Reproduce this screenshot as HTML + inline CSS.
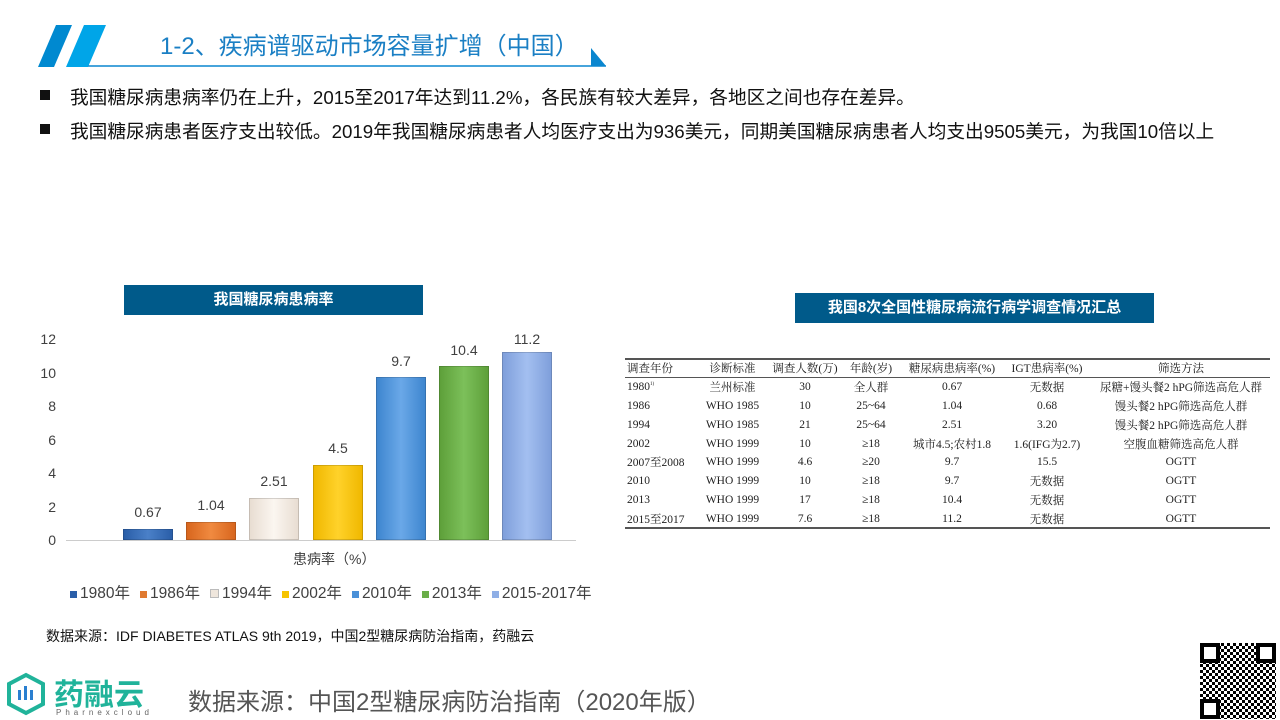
<!DOCTYPE html>
<html><head><meta charset="utf-8"><style>
body{margin:0;width:1280px;height:720px;background:#fff;position:relative;overflow:hidden;font-family:"Liberation Sans","Noto Sans CJK SC",sans-serif;}
.a{position:absolute;white-space:nowrap}
.bar{position:absolute;width:50px;border:1px solid rgba(0,0,0,.15);box-sizing:border-box}
.val{position:absolute;width:70px;text-align:center;font-size:14px;color:#404040}
.yl{position:absolute;left:28px;width:28px;text-align:right;font-size:14px;color:#404040}
table{border-collapse:collapse;font-family:"Liberation Serif","Noto Serif CJK SC",serif;font-size:11.5px;color:#222}
td{padding:0;height:18.8px;text-align:center}
.lg{display:inline-block;width:7px;height:7px;margin:0 3px 0 10px}
</style></head><body>
<svg class="a" style="left:0;top:0" width="640" height="70">
<polygon points="38,67 56,25 72,25 54,67" fill="#0089d0"/>
<polygon points="66,67 84,25 106,25 88,67" fill="#00a5e8"/>
<line x1="88" y1="66" x2="606" y2="66" stroke="#0a86cf" stroke-width="1.5"/>
<polygon points="591,48 591,66 606,66" fill="#0a86cf"/>
</svg>
<div class="a" style="left:160px;top:26px;font-size:24px;color:#1a7fc4">1-2、疾病谱驱动市场容量扩增（中国）</div>
<div class="a" style="left:40px;top:90px;width:10px;height:10px;background:#111"></div>
<div class="a" style="left:70px;top:83px;font-size:18.7px;color:#111">我国糖尿病患病率仍在上升，2015至2017年达到11.2%，各民族有较大差异，各地区之间也存在差异。</div>
<div class="a" style="left:40px;top:124px;width:10px;height:10px;background:#111"></div>
<div class="a" style="left:70px;top:117px;font-size:18.7px;color:#111">我国糖尿病患者医疗支出较低。2019年我国糖尿病患者人均医疗支出为936美元，同期美国糖尿病患者人均支出9505美元，为我国10倍以上</div>
<div class="a" style="left:124px;top:285px;width:299px;height:30px;background:#005a8a;color:#fff;font-size:15px;font-weight:bold;text-align:center;line-height:30px">我国糖尿病患病率</div>
<div class="yl" style="top:331px">12</div><div class="yl" style="top:365px">10</div><div class="yl" style="top:398px">8</div><div class="yl" style="top:432px">6</div><div class="yl" style="top:465px">4</div><div class="yl" style="top:499px">2</div><div class="yl" style="top:532px">0</div>
<div class="a" style="left:66px;top:540px;width:510px;height:1px;background:#ccc"></div>
<div class="bar" style="left:123px;top:529px;height:11px;background:linear-gradient(90deg,#2a5ea8,#4a80c8,#2a5ea8)"></div>
<div class="bar" style="left:186px;top:522px;height:18px;background:linear-gradient(90deg,#d8661e,#f08a40,#d8661e)"></div>
<div class="bar" style="left:249px;top:498px;height:42px;background:linear-gradient(90deg,#e8ddd2,#fbf6f0,#e8ddd2)"></div>
<div class="bar" style="left:313px;top:465px;height:75px;background:linear-gradient(90deg,#f0b800,#ffd22a,#f0b800)"></div>
<div class="bar" style="left:376px;top:377px;height:163px;background:linear-gradient(90deg,#3e86cf,#6aa8e8,#3e86cf)"></div>
<div class="bar" style="left:439px;top:366px;height:174px;background:linear-gradient(90deg,#5ea03a,#7cc05a,#5ea03a)"></div>
<div class="bar" style="left:502px;top:352px;height:188px;background:linear-gradient(90deg,#7f9fdb,#a3bff0,#7f9fdb)"></div>
<div class="val" style="left:113px;top:504px">0.67</div>
<div class="val" style="left:176px;top:497px">1.04</div>
<div class="val" style="left:239px;top:473px">2.51</div>
<div class="val" style="left:303px;top:440px">4.5</div>
<div class="val" style="left:366px;top:353px">9.7</div>
<div class="val" style="left:429px;top:342px">10.4</div>
<div class="val" style="left:492px;top:331px">11.2</div>
<div class="a" style="left:293px;top:549px;font-size:14px;color:#404040">患病率（%）</div>
<div class="a" style="left:60px;top:581px;font-size:15.5px;color:#404040">
<span class="lg" style="background:#2a5ea8"></span>1980年<span class="lg" style="background:#e07a30"></span>1986年<span class="lg" style="background:#efe6dc;border:1px solid #bbb"></span>1994年<span class="lg" style="background:#f6c400"></span>2002年<span class="lg" style="background:#4a90d8"></span>2010年<span class="lg" style="background:#6aae48"></span>2013年<span class="lg" style="background:#8fafe6"></span>2015-2017年</div>
<div class="a" style="left:46px;top:626px;font-size:14px;color:#111">数据来源：IDF DIABETES ATLAS 9th 2019，中国2型糖尿病防治指南，药融云</div>
<div class="a" style="left:795px;top:293px;width:359px;height:30px;background:#005a8a;color:#fff;font-size:15px;font-weight:bold;text-align:center;line-height:30px">我国8次全国性糖尿病流行病学调查情况汇总</div>
<div class="a" style="left:625px;top:358px;width:645px;height:2px;background:#555"></div>
<div class="a" style="left:625px;top:527px;width:645px;height:2px;background:#555"></div>
<div class="a" style="left:625px;top:377px;width:645px;height:1px;background:#555"></div>
<table class="a" style="left:627px;top:359px;width:643px">
<tr><td style="text-align:left;width:68px">调查年份</td><td style="width:75px">诊断标准</td><td style="width:70px">调查人数(万)</td><td style="width:62px">年龄(岁)</td><td style="width:100px">糖尿病患病率(%)</td><td style="width:90px">IGT患病率(%)</td><td>筛选方法</td></tr>
<tr><td style="text-align:left">1980<sup style="font-size:5px">1)</sup></td><td>兰州标准</td><td>30</td><td>全人群</td><td>0.67</td><td>无数据</td><td>尿糖+馒头餐2 hPG筛选高危人群</td></tr>
<tr><td style="text-align:left">1986</td><td>WHO 1985</td><td>10</td><td>25~64</td><td>1.04</td><td>0.68</td><td>馒头餐2 hPG筛选高危人群</td></tr>
<tr><td style="text-align:left">1994</td><td>WHO 1985</td><td>21</td><td>25~64</td><td>2.51</td><td>3.20</td><td>馒头餐2 hPG筛选高危人群</td></tr>
<tr><td style="text-align:left">2002</td><td>WHO 1999</td><td>10</td><td>≥18</td><td>城市4.5;农村1.8</td><td>1.6(IFG为2.7)</td><td>空腹血糖筛选高危人群</td></tr>
<tr><td style="text-align:left">2007至2008</td><td>WHO 1999</td><td>4.6</td><td>≥20</td><td>9.7</td><td>15.5</td><td>OGTT</td></tr>
<tr><td style="text-align:left">2010</td><td>WHO 1999</td><td>10</td><td>≥18</td><td>9.7</td><td>无数据</td><td>OGTT</td></tr>
<tr><td style="text-align:left">2013</td><td>WHO 1999</td><td>17</td><td>≥18</td><td>10.4</td><td>无数据</td><td>OGTT</td></tr>
<tr><td style="text-align:left">2015至2017</td><td>WHO 1999</td><td>7.6</td><td>≥18</td><td>11.2</td><td>无数据</td><td>OGTT</td></tr>
</table>
<svg class="a" style="left:6px;top:672px" width="40" height="44"><polygon points="20,3 37,12 37,32 20,41 3,32 3,12" fill="none" stroke="#20b39a" stroke-width="4"/><g fill="#2a7fd0"><rect x="12" y="18" width="3" height="10"/><rect x="18" y="14" width="3" height="14"/><rect x="24" y="18" width="3" height="10"/></g></svg>
<div class="a" style="left:54px;top:670px;font-size:30px;color:#20b39a;font-weight:bold">药融云</div>
<div class="a" style="left:56px;top:708px;font-size:8px;color:#666;letter-spacing:4px">Pharnexcloud</div>
<div class="a" style="left:188px;top:682px;font-size:24px;color:#555">数据来源：中国2型糖尿病防治指南（2020年版）</div>
<div class="a" style="left:1200px;top:643px;width:76px;height:76px;background:repeating-conic-gradient(#000 0 25%,#fff 0 50%) 0 0/6px 6px"></div>
<div class="a" style="left:1200px;top:643px;width:20px;height:20px;border:4px solid #000;box-sizing:border-box;background:#fff"></div>
<div class="a" style="left:1256px;top:643px;width:20px;height:20px;border:4px solid #000;box-sizing:border-box;background:#fff"></div>
<div class="a" style="left:1200px;top:699px;width:20px;height:20px;border:4px solid #000;box-sizing:border-box;background:#fff"></div>
</body></html>
